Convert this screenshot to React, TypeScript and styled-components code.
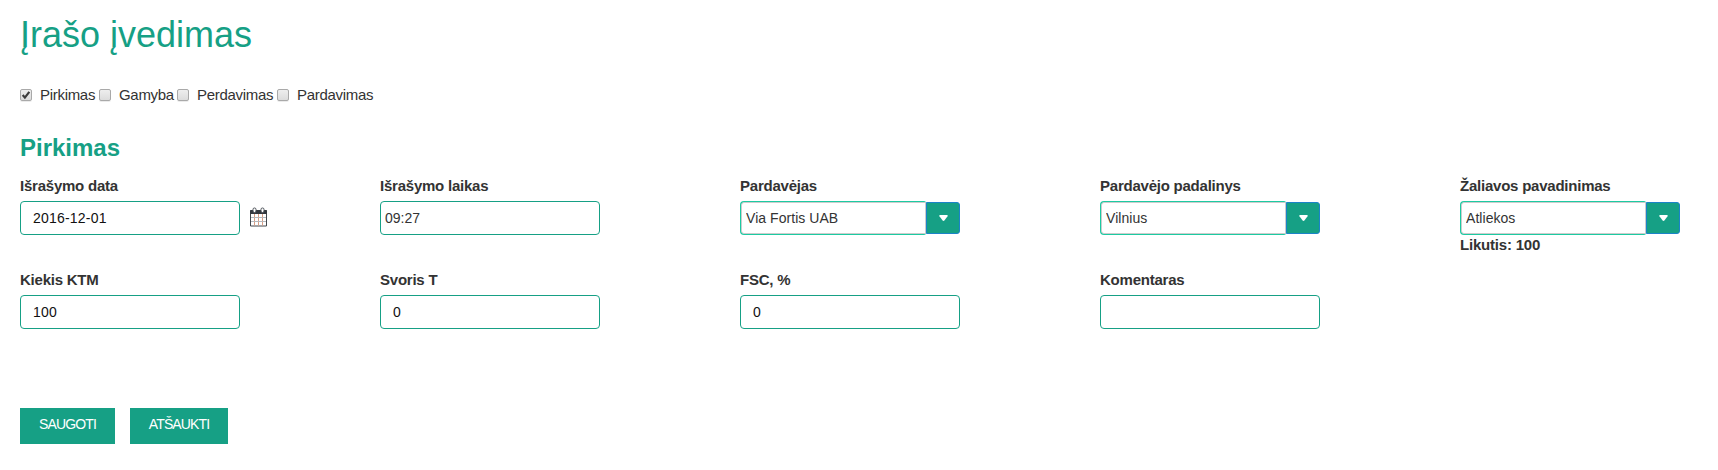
import React from "react";
import styled, { createGlobalStyle } from "styled-components";

const green = "#16a085";
const family = `"Liberation Sans", Arial, sans-serif`;

const GlobalStyle = createGlobalStyle`
  *, *::before, *::after { box-sizing: border-box; }
  body { margin: 0; background: #fff; color: #333; font-family: ${family}; }
`;

const Page = styled.main`
  padding: 15px 20px 0;
`;

const Title = styled.h1`
  margin: 0;
  font-size: 36px;
  font-weight: 400;
  line-height: 40px;
  color: ${green};
`;

const TypeBar = styled.div`
  display: flex;
  gap: 4px;
  margin-top: 30px;
  height: 20px;
`;

const TypeOption = styled.label<{ $width: number }>`
  display: flex;
  align-items: center;
  gap: 8px;
  width: ${(p) => p.$width}px;
  font-size: 15px;
  line-height: 20px;
  letter-spacing: -0.3px;
  white-space: nowrap;
`;

const Tick = styled.span`
  flex: none;
  width: 12px;
  height: 12px;
  border: 1px solid #a9a9a9;
  border-radius: 2px;
  background: linear-gradient(#eee, #dcdcdc);
  box-shadow: 0 1px 0 rgba(0, 0, 0, 0.08);

  svg {
    display: block;
  }
`;

const SectionTitle = styled.h2`
  margin: 29px 0 0;
  font-size: 24px;
  line-height: 28px;
  font-weight: 700;
  color: ${green};
`;

const Fields = styled.div`
  display: grid;
  grid-template-columns: repeat(5, 220px);
  grid-template-rows: 94px 94px;
  column-gap: 140px;
  margin-top: 14px;
`;

const Field = styled.div`
  display: flex;
  flex-direction: column;
`;

const FieldLabel = styled.label`
  font-size: 15px;
  font-weight: 700;
  line-height: 20px;
  height: 25px;
  letter-spacing: -0.23px;
  white-space: nowrap;
`;

const InputRow = styled.div`
  display: flex;
  align-items: center;
  gap: 9px;

  svg {
    flex: none;
    margin-bottom: 2px;
  }
`;

const Input = styled.input<{ $inset?: number }>`
  flex: none;
  width: 220px;
  height: 34px;
  padding: 0 ${(p) => p.$inset ?? 12}px;
  border: 1px solid ${green};
  border-radius: 4px;
  background: #fff;
  color: ${(p) => (p.$inset ? "#333" : "#111")};
  font: 14px ${family};
  letter-spacing: ${(p) => (p.$inset ? 0 : 0.2)}px;
  outline: none;
`;

const Combo = styled.div`
  display: flex;
  align-items: center;
  width: 220px;
  height: 34px;
`;

const ComboFrame = styled.div`
  flex: 1;
  height: 34px;
  padding: 1px 0 1px 1px;
  border-radius: 4px 2px 2px 4px;
  background: #1dcaa2;
`;

const ComboInput = styled.input`
  display: block;
  width: 100%;
  height: 32px;
  padding: 0 4px;
  border: 1px solid #ccc;
  border-radius: 3px 0 0 3px;
  background: #fff;
  color: #333;
  font: 14px ${family};
  letter-spacing: 0.05px;
  outline: none;
`;

const ComboButton = styled.button`
  display: flex;
  align-items: center;
  justify-content: center;
  flex: none;
  width: 34px;
  height: 32px;
  padding: 0 0 0 1px;
  border: 1px solid #1b83c8;
  border-radius: 0 3px 3px 0;
  background: ${green};
`;

const Balance = styled.strong`
  font-size: 15px;
  line-height: 20px;
  letter-spacing: -0.2px;
`;

const Actions = styled.div`
  display: flex;
  gap: 15px;
  margin-top: 44px;
`;

const ActionButton = styled.button<{ $width: number }>`
  width: ${(p) => p.$width}px;
  height: 36px;
  padding: 0 0 4px;
  border: 0;
  background: ${green};
  color: #fff;
  font: 14px ${family};
  letter-spacing: -0.87px;
`;

function CalendarIcon() {
  return (
    <svg width="19" height="20" viewBox="0 0 19 20" fill="none">
      <path d="M1 3h17v16H1z" fill="#fff" />
      <path d="M1.500 4v15h16V4" stroke="#43474d" strokeLinejoin="round" />
      <path d="M1 3.500Q1 3 1.500 3h16q.5 0 .5.500V7H1z" fill="#34383e" />
      <path d="M5.500 7v11.500M9.500 7v11.500M13.500 7v11.500" stroke="#d99d84" />
      <path d="M2 10.500h15M2 14.500h15" stroke="#b5b8bc" />
      <rect x="4" y="1" width="3" height="4.500" rx="1.400" fill="#fff" stroke="#4b5057" />
      <rect x="12" y="1" width="3" height="4.500" rx="1.400" fill="#fff" stroke="#4b5057" />
    </svg>
  );
}

function Check({ checked = false }: { checked?: boolean }) {
  return (
    <Tick role="checkbox" aria-checked={checked}>
      {checked && (
        <svg width="10" height="10" viewBox="0 0 10 10" fill="none">
          <path d="M1.700 5l2.200 2.600L8.300 1.800" stroke="#3c3c3c" strokeWidth="2.200" />
        </svg>
      )}
    </Tick>
  );
}

function Select({ value }: { value: string }) {
  return (
    <Combo>
      <ComboFrame>
        <ComboInput defaultValue={value} />
      </ComboFrame>
      <ComboButton aria-expanded={false}>
        <svg width="9" height="6" viewBox="0 0 10 6" preserveAspectRatio="none">
          <path d="M1 0h8q1 .3.500 1.200L6 5.500q-1 .8-2 0L.5 1.200Q0 .3 1 0z" fill="#fff" />
        </svg>
      </ComboButton>
    </Combo>
  );
}

const types = [
  { name: "Pirkimas", width: 75, checked: true },
  { name: "Gamyba", width: 74 },
  { name: "Perdavimas", width: 96 },
  { name: "Pardavimas", width: 100 },
];

export default function App() {
  return (
    <>
      <GlobalStyle />
      <Page>
        <Title>Įrašo įvedimas</Title>
        <TypeBar>
          {types.map((t) => (
            <TypeOption key={t.name} $width={t.width}>
              <Check checked={t.checked} />
              {t.name}
            </TypeOption>
          ))}
        </TypeBar>
        <SectionTitle>Pirkimas</SectionTitle>
        <Fields>
          <Field>
            <FieldLabel>Išrašymo data</FieldLabel>
            <InputRow>
              <Input defaultValue="2016-12-01" />
              <CalendarIcon />
            </InputRow>
          </Field>
          <Field>
            <FieldLabel>Išrašymo laikas</FieldLabel>
            <Input $inset={4} defaultValue="09:27" />
          </Field>
          <Field>
            <FieldLabel>Pardavėjas</FieldLabel>
            <Select value="Via Fortis UAB" />
          </Field>
          <Field>
            <FieldLabel>Pardavėjo padalinys</FieldLabel>
            <Select value="Vilnius" />
          </Field>
          <Field>
            <FieldLabel>Žaliavos pavadinimas</FieldLabel>
            <Select value="Atliekos" />
            <Balance>Likutis: 100</Balance>
          </Field>
          <Field>
            <FieldLabel>Kiekis KTM</FieldLabel>
            <Input defaultValue="100" />
          </Field>
          <Field>
            <FieldLabel>Svoris T</FieldLabel>
            <Input defaultValue="0" />
          </Field>
          <Field>
            <FieldLabel>FSC, %</FieldLabel>
            <Input defaultValue="0" />
          </Field>
          <Field>
            <FieldLabel>Komentaras</FieldLabel>
            <Input defaultValue="" />
          </Field>
        </Fields>
        <Actions>
          <ActionButton $width={95}>SAUGOTI</ActionButton>
          <ActionButton $width={98}>ATŠAUKTI</ActionButton>
        </Actions>
      </Page>
    </>
  );
}
